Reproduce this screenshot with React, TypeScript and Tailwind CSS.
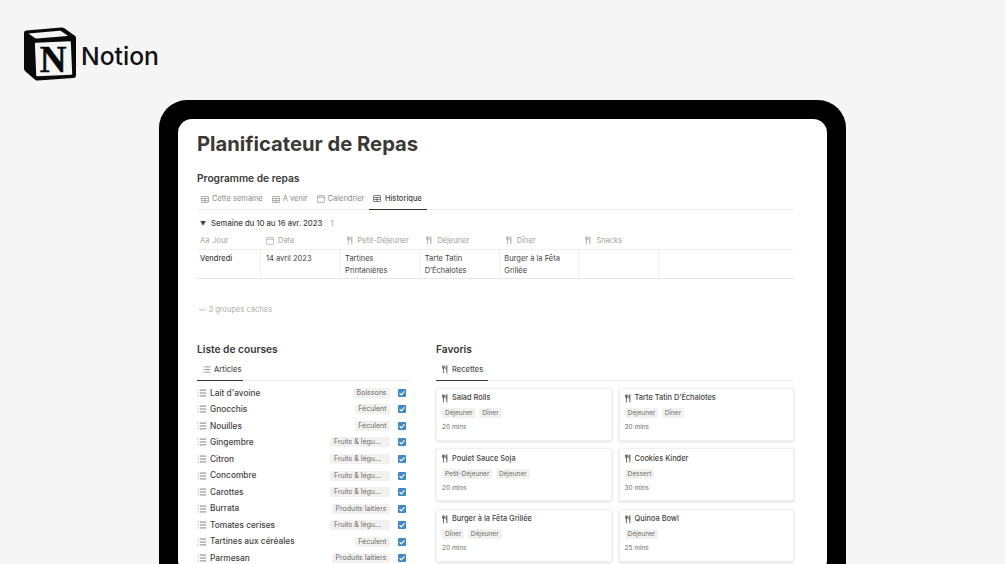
import { List } from "lucide-react";

const font = { fontFamily: "Inter, 'Liberation Sans', sans-serif" };

const Fork = ({ className = "" }: { className?: string }) => (
  <svg viewBox="0 0 7 10" className={`w-[6px] h-[9px] shrink-0 ${className}`} fill="none" stroke="currentColor">
    <path d="M0.700 0.500v2.700c0 .7.300 1 1 1s1-.3 1-1V0.500M1.700 0.500v9" strokeWidth="0.900" />
    <path d="M5.700 9.500V0.500C4.900 1 4.400 2.200 4.400 3.700c0 .9.400 1.400 1.300 1.400" strokeWidth="1" />
  </svg>
);

const TableIcon = ({ className = "" }: { className?: string }) => (
  <svg viewBox="0 0 12 10" className={`w-[8px] h-[7px] shrink-0 ${className}`} fill="none" stroke="currentColor" strokeWidth="1">
    <rect x="0.500" y="0.500" width="11" height="9" rx="1" />
    <path d="M0.500 3.500h11M0.500 6.500h11M6 3.500v6" />
  </svg>
);

const CalIcon = () => (
  <svg viewBox="0 0 12 11" className="w-[8px] h-[8px] shrink-0" fill="none" stroke="currentColor" strokeWidth="1">
    <rect x="0.500" y="0.500" width="11" height="10" rx="1" />
    <path d="M0.500 3h11" />
  </svg>
);

const Check = () => (
  <span className="w-[8px] h-[8px] rounded-[1px] bg-[#3f8ac7] flex items-center justify-center shrink-0">
    <svg viewBox="0 0 8 8" className="w-[8px] h-[8px]" fill="none" stroke="white" strokeWidth="1.200">
      <path d="M1.600 4.200l1.700 1.700 3.100-3.600" />
    </svg>
  </span>
);

const Logo = () => (
  <svg viewBox="0 0 54 56" className="w-[54px] h-[56px] shrink-0">
    <path d="M1 7c0-1.500.8-2.300 2.500-2.500L38 1.500c1.300-.1 2-.1 3 .6l10.500 7.400c1.200.8 1.500 1.400 1.500 2.800V49c0 2-.8 2.800-2.800 3L15 54.500c-1.600.1-2.300 0-3.200-1L2.500 45.500C1.500 44.500 1 43.500 1 42z" fill="#0a0a0a" />
    <path d="M5.500 7.500l31-2.700c.8 0 1.200 0 1.800.4l6.200 4.300c.3.200.2.500-.2.500L14 12.500c-1 .1-1.600 0-2.200-.4z" fill="#f5f5f5" />
    <rect x="12.500" y="16" width="36" height="33.500" rx="1" fill="#f5f5f5" transform="rotate(-2.500 30 32)" />
    <text x="30" y="46" textAnchor="middle" fontSize="37" fontWeight="700" fill="#0a0a0a" stroke="#0a0a0a" strokeWidth="0.500" fontFamily="'Liberation Serif', serif">N</text>
  </svg>
);

const tabs = [
  { label: "Cette semaine", icon: <TableIcon /> },
  { label: "À venir", icon: <TableIcon /> },
  { label: "Calendrier", icon: <CalIcon /> },
];

const cols = [
  { label: "Petit-Déjeuner", value: ["Tartines", "Printanières"] },
  { label: "Déjeuner", value: ["Tarte Tatin", "D’Échalotes"] },
  { label: "Dîner", value: ["Burger à la Fêta", "Grillée"] },
  { label: "Snacks", value: [] as string[] },
];

const items = [
  ["Lait d'avoine", "Boissons"],
  ["Gnocchis", "Féculent"],
  ["Nouilles", "Féculent"],
  ["Gingembre", "Fruits & légu..."],
  ["Citron", "Fruits & légu..."],
  ["Concombre", "Fruits & légu..."],
  ["Carottes", "Fruits & légu..."],
  ["Burrata", "Produits laitiers"],
  ["Tomates cerises", "Fruits & légu..."],
  ["Tartines aux céréales", "Féculent"],
  ["Parmesan", "Produits laitiers"],
];

const recipes = [
  { name: "Salad Rolls", tags: ["Déjeuner", "Dîner"], time: "20 mins" },
  { name: "Tarte Tatin D’Échalotes", tags: ["Déjeuner", "Dîner"], time: "30 mins" },
  { name: "Poulet Sauce Soja", tags: ["Petit-Déjeuner", "Déjeuner"], time: "20 mins" },
  { name: "Cookies Kinder", tags: ["Dessert"], time: "30 mins" },
  { name: "Burger à la Fêta Grillée", tags: ["Dîner", "Déjeuner"], time: "20 mins" },
  { name: "Quinoa Bowl", tags: ["Déjeuner"], time: "25 mins" },
];

export default function App() {
  return (
    <div className="w-[1005px] h-[564px] overflow-hidden bg-[#f5f5f5] text-[#45433f]" style={font}>
      <div className="flex gap-[4px] pl-[23px] pt-[26px] h-[100px] items-start">
        <Logo />
        <span className="text-[24.700px] font-medium text-[#111] mt-[14px] leading-[32px]">Notion</span>
      </div>

      <div className="ml-[159px] w-[687px] h-[500px] bg-black rounded-t-[28px] px-[19px] pt-[19px]">
        <div className="bg-white rounded-[14px] h-[455px] pl-[19px] pr-[33px] pt-[11px]">
          <h1 className="text-[20.200px] leading-[28px] font-bold text-[#3a3936]">Planificateur de Repas</h1>

          <h2 className="mt-[12px] text-[10.200px] leading-[16px] font-semibold text-[#3a3936]">Programme de repas</h2>

          <div className="mt-[3px] flex items-center border-b border-[#f0f0ef] h-[21px] text-[7.500px] text-[#8b8a86]">
            {tabs.map((t) => (
              <div key={t.label} className="flex items-center gap-[3px] px-[4px] mr-[1px]">
                {t.icon}
                <span>{t.label}</span>
              </div>
            ))}
            <div className="flex items-center gap-[3.500px] pl-[4px] pr-[5px] h-[21px] border-b-[1.500px] border-[#37352f] text-[#45433e] font-medium">
              <TableIcon />
              <span>Historique</span>
            </div>
          </div>

          <div className="mt-[7.500px] flex items-center h-[12px] text-[7.700px] pl-[3px]">
            <span className="text-[6px] mr-[5px]">▼</span>
            <span className="font-medium">Semaine du 10 au 16 avr. 2023</span>
            <span className="ml-[8px] text-[#a5a4a0]">1</span>
          </div>

          <div className="mt-[2.500px] flex h-[18px] items-center border-b border-[#efefee] text-[7.500px] text-[#a3a29e]">
            <div className="w-[64px] pl-[3px]"><span className="mr-[3px]">Aa</span>Jour</div>
            <div className="w-[79.600px] pl-[5px] flex items-center gap-[4px]"><CalIcon />Date</div>
            {cols.map((c) => (
              <div key={c.label} className="w-[79.600px] pl-[6px] flex items-center gap-[5px]"><Fork />{c.label}</div>
            ))}
          </div>

          <div className="flex h-[28.500px] border-b border-[#e6e6e5] text-[7.500px] leading-[11.500px]">
            <div className="w-[64px] pl-[3px] pt-[3px] border-r border-[#f2f2f1] font-medium">Vendredi</div>
            <div className="w-[79.600px] pl-[5px] pt-[3px] border-r border-[#f2f2f1]">14 avril 2023</div>
            {cols.map((c) => (
              <div key={c.label} className="w-[79.600px] pl-[4.500px] pt-[3px] border-r border-[#f2f2f1]">
                {c.value.map((v) => <div key={v}>{v}</div>)}
              </div>
            ))}
          </div>

          <div className="mt-[25px] h-[12px] flex items-center gap-[4px] pl-[2px] text-[7.500px] text-[#aeada9]">
            <span className="text-[7px] scale-x-150">⌄</span>
            <span>3 groupes cachés</span>
          </div>

          <div className="mt-[25px] grid grid-cols-[214px_358px] gap-[25px]">
            <div>
              <h2 className="text-[10.200px] leading-[16px] font-semibold text-[#3a3936]">Liste de courses</h2>
              <div className="mt-[3px] h-[21px] flex border-b border-[#f0f0ef] text-[7.500px] text-[#55534e]">
                <div className="flex items-center gap-[3px] pl-[5px] w-[46px] h-[21px] border-b-[1.500px] border-[#37352f] font-medium">
                  <List className="w-[9px] h-[9px] shrink-0" strokeWidth={1.700} />
                  <span>Articles</span>
                </div>
              </div>
              <div className="mt-[4px]">
                {items.map(([name, cat]) => (
                  <div key={name} className="flex items-center h-[16.550px] text-[8.300px]">
                    <List className="w-[10px] h-[10px] shrink-0 mr-[3px] text-[#45433e]" strokeWidth={1.600} />
                    <span className="font-medium text-[#45433e]">{name}</span>
                    <span className={`ml-auto mr-[8px] h-[10px] leading-[10px] pl-[3.500px] rounded-[2px] bg-[#f1f1ef] text-[7px] text-[#6d6c67] ${cat.endsWith("...") ? "pr-[9px]" : "pr-[3.500px]"}`}>{cat}</span>
                    <Check />
                    <span className="w-[5px]" />
                  </div>
                ))}
              </div>
            </div>

            <div>
              <h2 className="text-[10.200px] leading-[16px] font-semibold text-[#3a3936]">Favoris</h2>
              <div className="mt-[3px] h-[21px] flex border-b border-[#f0f0ef] text-[7.500px] text-[#55534e]">
                <div className="flex items-center gap-[4px] pl-[6px] pr-[5px] h-[21px] border-b-[1.500px] border-[#37352f] font-medium">
                  <Fork />
                  <span>Recettes</span>
                </div>
              </div>
              <div className="mt-[7px] grid grid-cols-2 gap-x-[7px] gap-y-[7.500px]">
                {recipes.map((r) => (
                  <div key={r.name} className="h-[53px] rounded-[2px] bg-white border border-[#f0f0ef] shadow-[0_1px_3px_rgba(15,15,15,0.14)] pl-[5px] pt-[3.500px] text-[7.400px]">
                    <div className="flex items-center gap-[4px] h-[12px] font-medium text-[#45433e]"><Fork />{r.name}</div>
                    <div className="mt-[4px] flex gap-[3.500px] h-[10px]">
                      {r.tags.map((t) => (
                        <span key={t} className="px-[3px] leading-[10px] rounded-[2px] bg-[#f1f1ef] text-[6.500px] text-[#6d6c67]">{t}</span>
                      ))}
                    </div>
                    <div className="mt-[4px] text-[6.500px] leading-[10px] text-[#6d6c67]">{r.time}</div>
                  </div>
                ))}
              </div>
            </div>
          </div>
        </div>
      </div>
    </div>
  );
}
